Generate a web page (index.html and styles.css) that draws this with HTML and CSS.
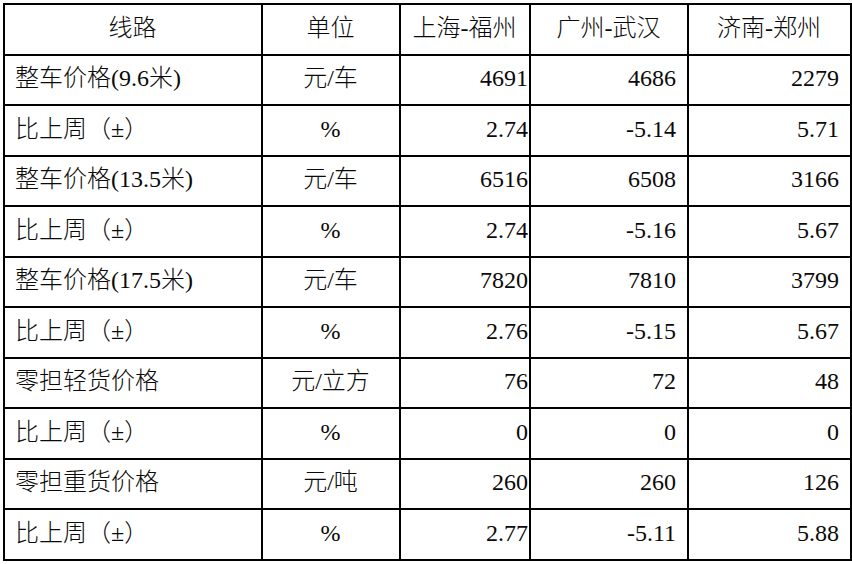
FILE: index.html
```html
<!DOCTYPE html>
<html lang="zh-CN">
<head>
<meta charset="utf-8">
<title>运价表</title>
<link rel="stylesheet" href="styles.css">
</head>
<body>
<table class="rates">
  <colgroup>
    <col class="c-line">
    <col class="c-unit">
    <col class="c-a">
    <col class="c-b">
    <col class="c-c">
  </colgroup>
  <thead>
    <tr>
      <th>线路</th>
      <th>单位</th>
      <th>上海-福州</th>
      <th>广州-武汉</th>
      <th>济南-郑州</th>
    </tr>
  </thead>
  <tbody>
    <tr><td class="name">整车价格(9.6米)</td><td class="unit">元/车</td><td class="num first">4691</td><td class="num">4686</td><td class="num">2279</td></tr>
    <tr><td class="name">比上周（±）</td><td class="unit">%</td><td class="num first">2.74</td><td class="num">-5.14</td><td class="num">5.71</td></tr>
    <tr><td class="name">整车价格(13.5米)</td><td class="unit">元/车</td><td class="num first">6516</td><td class="num">6508</td><td class="num">3166</td></tr>
    <tr><td class="name">比上周（±）</td><td class="unit">%</td><td class="num first">2.74</td><td class="num">-5.16</td><td class="num">5.67</td></tr>
    <tr><td class="name">整车价格(17.5米)</td><td class="unit">元/车</td><td class="num first">7820</td><td class="num">7810</td><td class="num">3799</td></tr>
    <tr><td class="name">比上周（±）</td><td class="unit">%</td><td class="num first">2.76</td><td class="num">-5.15</td><td class="num">5.67</td></tr>
    <tr><td class="name">零担轻货价格</td><td class="unit">元/立方</td><td class="num first">76</td><td class="num">72</td><td class="num">48</td></tr>
    <tr><td class="name">比上周（±）</td><td class="unit">%</td><td class="num first">0</td><td class="num">0</td><td class="num">0</td></tr>
    <tr><td class="name">零担重货价格</td><td class="unit">元/吨</td><td class="num first">260</td><td class="num">260</td><td class="num">126</td></tr>
    <tr><td class="name">比上周（±）</td><td class="unit">%</td><td class="num first">2.77</td><td class="num">-5.11</td><td class="num">5.88</td></tr>
  </tbody>
</table>
</body>
</html>
```

FILE: styles.css
```css
html, body {
  margin: 0;
  padding: 0;
  background: #ffffff;
}

body {
  padding: 3px 0 0 3px;
}

.rates {
  border-collapse: collapse;
  table-layout: fixed;
  width: 847px;
  font-family: "Liberation Serif", "Noto Sans CJK SC", serif;
  font-size: 24px;
  font-weight: 300;
  color: #0a0a0a;
}

.c-line { width: 258px; }
.c-unit { width: 138px; }
.c-a { width: 130px; }
.c-b { width: 158px; }
.c-c { width: 163px; }

.rates th,
.rates td {
  border: 2px solid #000000;
  height: 46.5px;
  padding: 0 11px 2px 10px;
  font-weight: 300;
  line-height: 1.2;
  white-space: nowrap;
  vertical-align: middle;
}

.rates th {
  text-align: center;
}

.rates td.name {
  text-align: left;
}

.rates td.unit {
  text-align: center;
}

.rates td.num {
  text-align: right;
}

.rates td.num.first {
  padding-right: 1px;
}
```
